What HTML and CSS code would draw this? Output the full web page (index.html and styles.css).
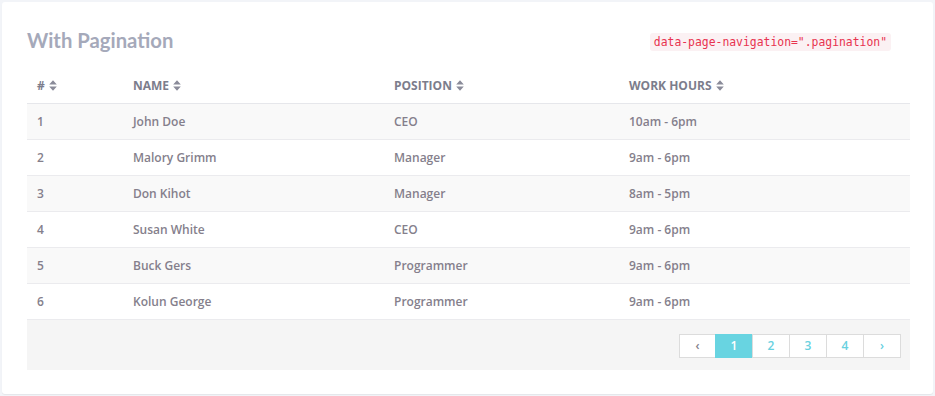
FILE: index.html
```html
<!DOCTYPE html>
<html>
<head>
<meta charset="utf-8">
<link rel="stylesheet" href="styles.css">
</head>
<body>
<div class="card">
  <div class="card-head">
    <h2 class="title">With Pagination</h2>
    <code class="code">data-page-navigation=".pagination"</code>
  </div>
  <table class="table">
    <colgroup>
      <col class="c1"><col class="c2"><col class="c3"><col class="c4">
    </colgroup>
    <thead>
      <tr>
        <th># <svg class="sort" viewBox="0 0 8 11"><path d="M4 0.3 L7.8 4.6 H0.2 Z M4 10.7 L7.8 6.4 H0.2 Z"/></svg></th>
        <th>Name <svg class="sort" viewBox="0 0 8 11"><path d="M4 0.3 L7.8 4.6 H0.2 Z M4 10.7 L7.8 6.4 H0.2 Z"/></svg></th>
        <th>Position <svg class="sort" viewBox="0 0 8 11"><path d="M4 0.3 L7.8 4.6 H0.2 Z M4 10.7 L7.8 6.4 H0.2 Z"/></svg></th>
        <th>Work Hours <svg class="sort" viewBox="0 0 8 11"><path d="M4 0.3 L7.8 4.6 H0.2 Z M4 10.7 L7.8 6.4 H0.2 Z"/></svg></th>
      </tr>
    </thead>
    <tbody>
      <tr><td>1</td><td>John Doe</td><td>CEO</td><td>10am - 6pm</td></tr>
      <tr><td>2</td><td>Malory Grimm</td><td>Manager</td><td>9am - 6pm</td></tr>
      <tr><td>3</td><td>Don Kihot</td><td>Manager</td><td>8am - 5pm</td></tr>
      <tr><td>4</td><td>Susan White</td><td>CEO</td><td>9am - 6pm</td></tr>
      <tr><td>5</td><td>Buck Gers</td><td>Programmer</td><td>9am - 6pm</td></tr>
      <tr><td>6</td><td>Kolun George</td><td>Programmer</td><td>9am - 6pm</td></tr>
    </tbody>
    <tfoot>
      <tr>
        <td colspan="4">
          <ul class="pagination">
            <li class="page prev">‹</li>
            <li class="page active">1</li>
            <li class="page">2</li>
            <li class="page">3</li>
            <li class="page">4</li>
            <li class="page">›</li>
          </ul>
        </td>
      </tr>
    </tfoot>
  </table>
</div>
</body>
</html>
```
FILE: styles.css
```css
html, body {
  margin: 0;
  padding: 0;
}
body {
  background: #f2f4f8;
  padding: 2px;
  font-family: "Open Sans", "Noto Sans", sans-serif;
  font-size: 12px;
  color: #857f8c;
}
.card {
  background: #fff;
  border-radius: 3px;
  padding: 22px 23px 25px 25px;
  height: 392px;
  box-sizing: border-box;
  box-shadow: 0 1px 1px rgba(0,0,0,0.06);
}
.card-head {
  display: flex;
  justify-content: space-between;
  align-items: center;
  height: 32px;
  margin-bottom: 13px;
}
.title {
  margin: 0;
  margin-top: -1px;
  font-family: Lato, "Open Sans", sans-serif;
  font-weight: 700;
  font-size: 20.3px;
  color: #a5a9ba;
}
.code {
  font-family: "DejaVu Sans Mono", "Liberation Mono", monospace;
  font-size: 11.4px;
  color: #e8334f;
  background: #fbf1f3;
  padding: 2px 4px;
  border-radius: 3px;
  margin-right: 19px;
  margin-top: 4px;
}
.table {
  width: 100%;
  border-collapse: collapse;
  table-layout: fixed;
}
.c1 { width: 96px; }
.c2 { width: 261px; }
.c3 { width: 235px; }
.c4 { width: auto; }
.table th {
  text-align: left;
  font-weight: 700;
  text-transform: uppercase;
  color: #7c7d8c;
  font-size: 12px;
  height: 34px;
  padding: 0 10px;
  box-sizing: border-box;
  border-bottom: 1px solid #e6e7eb;
  vertical-align: middle;
}
.sort {
  width: 8px;
  height: 11px;
  fill: #8a8b99;
  vertical-align: -1px;
  margin-left: 1px;
}
.table td {
  height: 36px;
  padding: 0 10px;
  box-sizing: border-box;
  border-bottom: 1px solid #ebebee;
  vertical-align: middle;
  font-weight: 600;
}
.table tbody tr:nth-child(odd) td {
  background: #f9f9f9;
}
.table tfoot td {
  background: #f5f5f5;
  height: 51px;
  border-bottom: none;
  padding: 14px 9px 0 0;
  vertical-align: top;
}
.pagination {
  list-style: none;
  margin: 0;
  padding: 0;
  display: flex;
  justify-content: flex-end;
}
.page {
  width: 38px;
  height: 24px;
  box-sizing: border-box;
  border: 1px solid #dcdcdc;
  margin-left: -1px;
  background: #fff;
  color: #68d1df;
  font-size: 12px;
  font-weight: 600;
  display: flex;
  align-items: center;
  justify-content: center;
}
.page.prev {
  width: 37px;
  color: #857f8c;
}
.page.active {
  background: #68d4e1;
  border-color: #68d4e1;
  color: #fff;
}
```
